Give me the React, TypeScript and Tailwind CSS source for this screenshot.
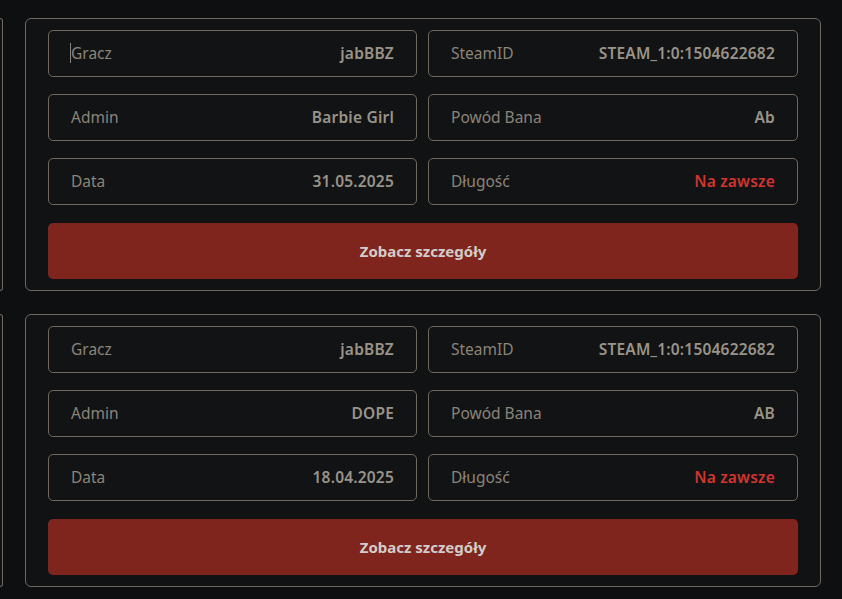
import React from 'react';

type Ban = {
  player: string;
  steamId: string;
  admin: string;
  reason: string;
  date: string;
  length: string;
};

const bans: Ban[] = [
  { player: 'jabBBZ', steamId: 'STEAM_1:0:1504622682', admin: 'Barbie Girl', reason: 'Ab', date: '31.05.2025', length: 'Na zawsze' },
  { player: 'jabBBZ', steamId: 'STEAM_1:0:1504622682', admin: 'DOPE', reason: 'AB', date: '18.04.2025', length: 'Na zawsze' },
];

function Field({ label, value, danger, caret }: { label: string; value: string; danger?: boolean; caret?: boolean }) {
  return (
    <div className="h-[47px] flex items-center justify-between px-[22px] rounded-[5px] border border-[#6f685d] bg-[#121315]">
      <span className="relative text-[15.5px] text-[#8b8479]">
        {caret && <span className="absolute -left-px top-[1px] h-[20px] w-px bg-[#8b8479]" aria-hidden />}
        {label}
      </span>
      <span className={`text-[15.5px] font-semibold tracking-[0.2px] ${danger ? 'text-[#d2352e]' : 'text-[#9a9388]'}`}>{value}</span>
    </div>
  );
}

function BanCard({ ban, first }: { ban: Ban; first?: boolean }) {
  return (
    <div className="w-[796px] shrink-0 rounded-[6px] border border-[#6f685d] bg-[#111214] px-[22px] pt-[11px] pb-[11px] flex flex-col gap-[18px]">
      <div className="grid grid-cols-[369px_370px] gap-x-[11px] gap-y-[17px]">
        <Field label="Gracz" value={ban.player} caret={first} />
        <Field label="SteamID" value={ban.steamId} />
        <Field label="Admin" value={ban.admin} />
        <Field label="Powód Bana" value={ban.reason} />
        <Field label="Data" value={ban.date} />
        <Field label="Długość" value={ban.length} danger />
      </div>
      <button
        type="button"
        className="h-[56px] w-full rounded-[5px] bg-[#80241e] text-[15px] font-bold text-[#d2cdca]"
      >
        Zobacz szczegóły
      </button>
    </div>
  );
}

export default function App() {
  return (
    <div
      className="min-h-[599px] w-[842px] overflow-hidden bg-[#0e0f11] pt-[18px]"
      style={{ fontFamily: '"Noto Sans", "Open Sans", sans-serif' }}
    >
      <div className="flex flex-col gap-[23px]">
        {bans.map((ban, i) => (
          <div key={i} className="flex gap-[22px] h-[273px]">
            {/* cut-off card from the previous column */}
            <div className="w-[3px] shrink-0 rounded-r-[6px] border border-l-0 border-[#6f685d] bg-[#111214]" aria-hidden />
            <BanCard ban={ban} first={i === 0} />
          </div>
        ))}
      </div>
    </div>
  );
}
